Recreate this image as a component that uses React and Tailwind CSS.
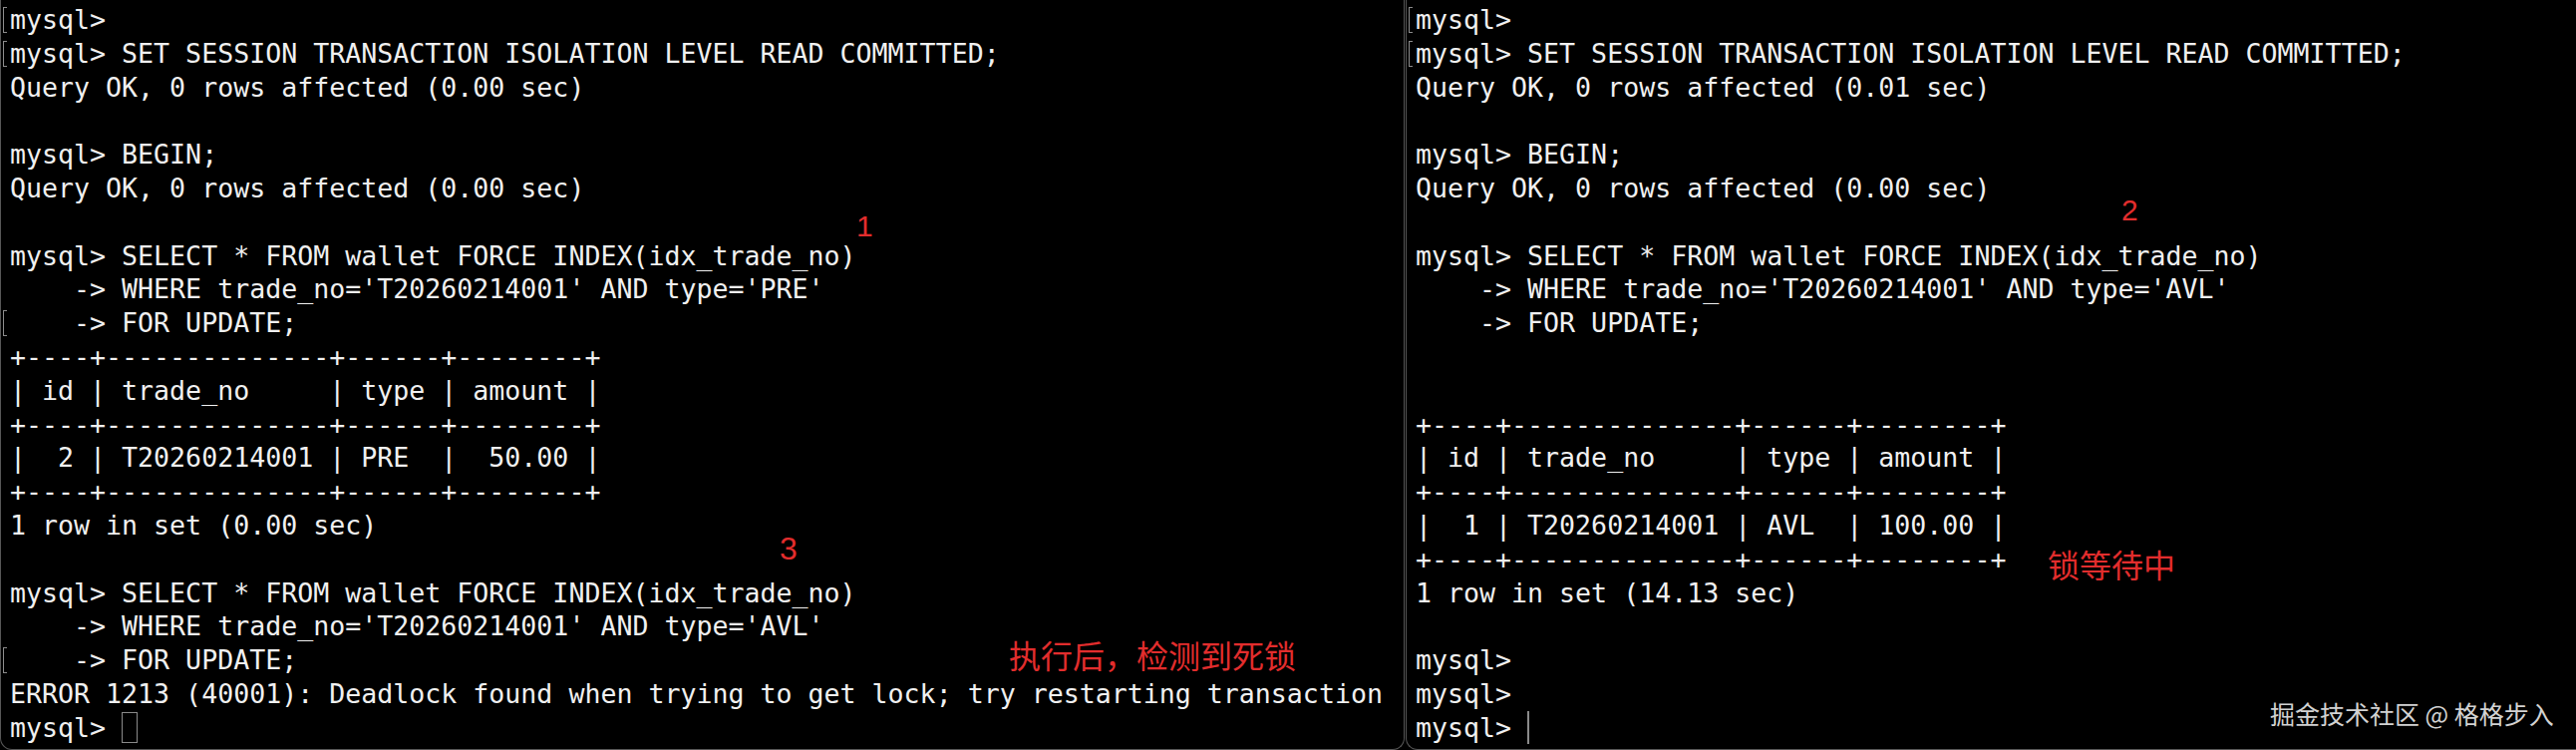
import React from "react";

const left = [
  { t: "mysql> ", b: true },
  { t: "mysql> SET SESSION TRANSACTION ISOLATION LEVEL READ COMMITTED;", b: true },
  { t: "Query OK, 0 rows affected (0.00 sec)" },
  { t: "" },
  { t: "mysql> BEGIN;" },
  { t: "Query OK, 0 rows affected (0.00 sec)" },
  { t: "" },
  { t: "mysql> SELECT * FROM wallet FORCE INDEX(idx_trade_no)" },
  { t: "    -> WHERE trade_no='T20260214001' AND type='PRE'" },
  { t: "    -> FOR UPDATE;", b: true },
  { t: "+----+--------------+------+--------+" },
  { t: "| id | trade_no     | type | amount |" },
  { t: "+----+--------------+------+--------+" },
  { t: "|  2 | T20260214001 | PRE  |  50.00 |" },
  { t: "+----+--------------+------+--------+" },
  { t: "1 row in set (0.00 sec)" },
  { t: "" },
  { t: "mysql> SELECT * FROM wallet FORCE INDEX(idx_trade_no)" },
  { t: "    -> WHERE trade_no='T20260214001' AND type='AVL'" },
  { t: "    -> FOR UPDATE;", b: true },
  { t: "ERROR 1213 (40001): Deadlock found when trying to get lock; try restarting transaction" },
  { t: "mysql> ", c: "box" },
];

const right = [
  { t: "mysql> ", b: true },
  { t: "mysql> SET SESSION TRANSACTION ISOLATION LEVEL READ COMMITTED;", b: true },
  { t: "Query OK, 0 rows affected (0.01 sec)" },
  { t: "" },
  { t: "mysql> BEGIN;" },
  { t: "Query OK, 0 rows affected (0.00 sec)" },
  { t: "" },
  { t: "mysql> SELECT * FROM wallet FORCE INDEX(idx_trade_no)" },
  { t: "    -> WHERE trade_no='T20260214001' AND type='AVL'" },
  { t: "    -> FOR UPDATE;" },
  { t: "" },
  { t: "" },
  { t: "+----+--------------+------+--------+" },
  { t: "| id | trade_no     | type | amount |" },
  { t: "+----+--------------+------+--------+" },
  { t: "|  1 | T20260214001 | AVL  | 100.00 |" },
  { t: "+----+--------------+------+--------+" },
  { t: "1 row in set (14.13 sec)" },
  { t: "" },
  { t: "mysql> " },
  { t: "mysql> " },
  { t: "mysql> ", c: "bar" },
];

function Line({ line }) {
  return (
    <div className="flex items-center h-[33.8px]">
      <span className="w-[9px] flex-none flex items-center">
        {line.b ? (
          <span className="ml-[2px] block w-[4px] h-[26px] border-l-[1.5px] border-y-[1.5px] border-[#8c8c8c]" />
        ) : null}
      </span>
      <span className="whitespace-pre">{line.t}</span>
      {line.c === "box" ? (
        <span className="block w-[16px] h-[31px] border-[1.5px] border-[#8a8a8a]" />
      ) : null}
      {line.c === "bar" ? (
        <span className="block w-[1.5px] h-[33px] bg-[#8a8a8a]" />
      ) : null}
    </div>
  );
}

function Pane({ lines, className }) {
  return (
    <div
      className={
        "h-full pt-[3px] border-[#575757] text-[#f0f0f0] font-['DejaVu_Sans_Mono',monospace] text-[26.6px] leading-[33.8px] " +
        className
      }
    >
      {lines.map((l, i) => (
        <Line key={i} line={l} />
      ))}
    </div>
  );
}

export default function App() {
  return (
    <div className="relative flex w-[2584px] h-[752px] bg-black overflow-hidden">
      <Pane
        lines={left}
        className="w-[1409px] flex-none border-l border-r border-b rounded-b-[12px]"
      />
      <Pane
        lines={right}
        className="ml-[1px] flex-1 border-l border-b rounded-bl-[12px]"
      />

      <span className="absolute left-[859px] top-[212px] text-[30px] leading-none text-[#e22d2d] font-['Liberation_Sans',sans-serif]">
        1
      </span>
      <span className="absolute left-[782px] top-[534px] text-[32px] leading-none text-[#e22d2d] font-['Liberation_Sans',sans-serif]">
        3
      </span>
      <span className="absolute left-[2128px] top-[196px] text-[30px] leading-none text-[#e22d2d] font-['Liberation_Sans',sans-serif]">
        2
      </span>
      <span className="absolute left-[1012px] top-[640px] text-[32px] leading-none text-[#e22d2d] font-['Noto_Sans_CJK_SC',sans-serif] whitespace-nowrap">
        执行后，检测到死锁
      </span>
      <span className="absolute left-[2054px] top-[549px] text-[32px] leading-none text-[#e22d2d] font-['Noto_Sans_CJK_SC',sans-serif] whitespace-nowrap">
        锁等待中
      </span>
      <span className="absolute left-[2277px] top-[703px] text-[25px] leading-none text-[#d2d2d2] font-['Noto_Sans_CJK_SC',sans-serif] whitespace-nowrap">
        掘金技术社区 @ 格格步入
      </span>
    </div>
  );
}
